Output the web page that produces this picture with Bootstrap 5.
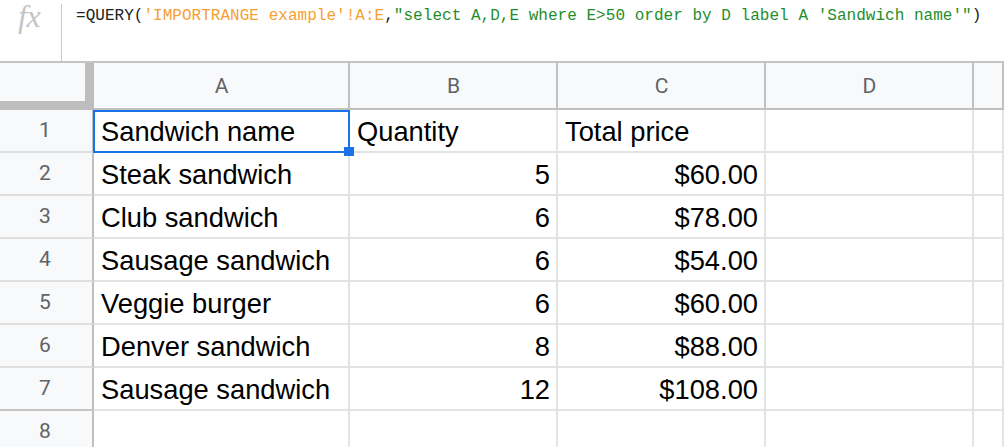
<!DOCTYPE html>
<html lang="en">
<head>
<meta charset="utf-8">
<title>Sheet</title>
<link rel="stylesheet" href="https://cdn.jsdelivr.net/npm/bootstrap@5.3.0/dist/css/bootstrap.min.css">
<style>
html,body{height:447px;overflow:hidden;background:#fff}
.fbar{height:63px;border-bottom:2px solid #c4c4c4}
.fxbox{width:62px;height:58px;border-right:1px solid #c8c8c8;margin-top:4px;flex:none}
.fxtxt{font:italic 32px/1 "Liberation Serif",serif;color:#c4c4c4;margin:-4px 0 0 18px;letter-spacing:-.5px}
.ftxt{font:16px/20px "Liberation Mono",monospace;color:#222;letter-spacing:.03px;padding:6px 0 0 14px;white-space:nowrap}
.fo{color:#f7a032}.fg{color:#1e8e2b}
.sheet{display:grid;grid-template-columns:94px 256px 208px 208px 208px 1fr;grid-template-rows:47px repeat(8,43px);position:relative}
.sheet>div{border-right:2px solid #e2e3e3;border-bottom:2px solid #e2e3e3;font:27.3px/1 "Liberation Sans",Arial,sans-serif;color:#000;padding:2px 6px 0 7px;display:flex;align-items:center;white-space:nowrap;overflow:hidden}
.sheet>.num{justify-content:flex-end}
.sheet>.hc,.sheet>.rh{background:#f8f9fa;font:21px/1 Roboto,sans-serif;color:#5f6368;justify-content:center;border-color:#c0c0c0;padding:0}
.sheet>.hc{padding:1px 0 0 1px}
.sheet>.rh{border-bottom-color:#dfdfdf;padding-right:2px}
.sheet>.rh:nth-child(n+43){border-bottom-color:#c4c4c4}
.sheet>.cnr{background:#f8f9fa;border-right:9px solid #bdbdbd;border-bottom:9px solid #bdbdbd;padding:0}
.selbox{position:absolute;left:93px;top:47px;width:257px;height:43px;border:2px solid #1a73e8;pointer-events:none}
.selh{position:absolute;left:344px;top:84px;width:10px;height:9px;background:#1a73e8}
.sheet>.rh.r8{border-bottom:0;padding-bottom:3px}.sheet>.last{border-bottom:0}
</style>
</head>
<body>
<div class="fbar d-flex">
  <div class="fxbox"><div class="fxtxt">fx</div></div>
  <div class="ftxt">=QUERY(<span class="fo">'IMPORTRANGE example'!A:E</span>,<span class="fg">"select A,D,E where E&gt;50 order by D label A 'Sandwich name'"</span>)</div>
</div>
<div class="sheet">
  <div class="cnr"></div><div class="hc">A</div><div class="hc">B</div><div class="hc">C</div><div class="hc">D</div><div class="hc"></div>
  <div class="rh">1</div><div>Sandwich name</div><div>Quantity</div><div>Total price</div><div></div><div></div>
  <div class="rh">2</div><div>Steak sandwich</div><div class="num">5</div><div class="num">$60.00</div><div></div><div></div>
  <div class="rh">3</div><div>Club sandwich</div><div class="num">6</div><div class="num">$78.00</div><div></div><div></div>
  <div class="rh">4</div><div>Sausage sandwich</div><div class="num">6</div><div class="num">$54.00</div><div></div><div></div>
  <div class="rh">5</div><div>Veggie burger</div><div class="num">6</div><div class="num">$60.00</div><div></div><div></div>
  <div class="rh">6</div><div>Denver sandwich</div><div class="num">8</div><div class="num">$88.00</div><div></div><div></div>
  <div class="rh">7</div><div>Sausage sandwich</div><div class="num">12</div><div class="num">$108.00</div><div></div><div></div>
  <div class="rh r8">8</div><div class="last"></div><div class="last"></div><div class="last"></div><div class="last"></div><div class="last"></div>
  <span class="selbox"></span><span class="selh"></span>
</div>
<script src="https://cdn.jsdelivr.net/npm/bootstrap@5.3.0/dist/js/bootstrap.bundle.min.js"></script>
</body>
</html>
